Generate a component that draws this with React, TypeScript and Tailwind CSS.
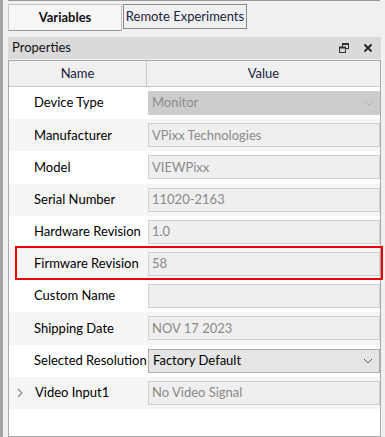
import React from "react";

const font = { fontFamily: "Lato, 'Open Sans', sans-serif" };

function Chevron({ className = "" }: { className?: string }) {
  return (
    <svg width="10" height="6" viewBox="0 0 10 6" className={className}>
      <path d="M1 1 L5 5 L9 1" fill="none" stroke="currentColor" strokeWidth="1" />
    </svg>
  );
}

type Row = {
  name: string;
  value: string;
  kind: "text" | "combo-disabled" | "combo";
  expand?: boolean;
};

const rows: Row[] = [
  { name: "Device Type", value: "Monitor", kind: "combo-disabled" },
  { name: "Manufacturer", value: "VPixx Technologies", kind: "text" },
  { name: "Model", value: "VIEWPixx", kind: "text" },
  { name: "Serial Number", value: "11020-2163", kind: "text" },
  { name: "Hardware Revision", value: "1.0", kind: "text" },
  { name: "Firmware Revision", value: "58", kind: "text" },
  { name: "Custom Name", value: "", kind: "text" },
  { name: "Shipping Date", value: "NOV 17 2023", kind: "text" },
  { name: "Selected Resolution", value: "Factory Default", kind: "combo" },
  { name: "Video Input1", value: "No Video Signal", kind: "text", expand: true },
];

function Field({ row }: { row: Row }) {
  if (row.kind === "combo-disabled") {
    return (
      <div className="flex h-[24px] w-full items-center justify-between bg-[#cccccc] pl-[4px] pr-[6px] text-[#8c8c8c]">
        <span>{row.value}</span>
        <Chevron className="text-[#b4b4b4]" />
      </div>
    );
  }
  if (row.kind === "combo") {
    return (
      <div className="flex h-[24px] w-full items-center justify-between border border-[#adadad] bg-[#e5e5e5] pl-[4px] pr-[6px] text-[#000]">
        <span>{row.value}</span>
        <Chevron className="text-[#555]" />
      </div>
    );
  }
  return (
    <div className="flex h-[24px] w-full items-center border border-[#cfcfcf] bg-[#efefef] pl-[3px] text-[#8a8a8a]">
      <span>{row.value}</span>
    </div>
  );
}

export default function App() {
  return (
    <div
      className="relative flex h-[437px] w-[385px] overflow-hidden bg-[#f0f0f0] text-[13px] text-black"
      style={font}
    >
      <div className="w-[3px] shrink-0 bg-[#a3a3a3]" />
      <div className="flex min-w-0 flex-1 flex-col pl-[5px]">
        {/* tab bar */}
        <div className="mr-[5px] h-[37px] border-t border-[#9a9a9a]">
          <div className="mt-[3px] flex items-start">
            <div className="flex h-[27px] w-[114px] items-center justify-center border border-[#c4c4c4] border-b-[#9a9a9a] bg-[#f6f6f6] font-bold text-[#111]">
              Variables
            </div>
            <div className="ml-[1px] flex h-[25px] w-[124px] items-center justify-center border border-[#8a8a8a] bg-[#f0f0f0] text-[#1c2340]">
              Remote Experiments
            </div>
          </div>
        </div>
        {/* Properties header */}
        <div className="mr-[4px] flex h-[22px] items-center justify-between bg-[#dadada] pl-[4px] pr-[8px] text-[#111]">
          <span>Properties</span>
          <div className="flex items-center gap-[14px]">
            <svg width="10" height="10" viewBox="0 0 10 10">
              <rect x="3.5" y="0.5" width="6" height="5" fill="none" stroke="#333" strokeWidth="1" />
              <rect x="3.5" y="0.5" width="6" height="1.5" fill="#333" />
              <rect x="0.5" y="4" width="6" height="5.5" fill="#dadada" stroke="#333" strokeWidth="1" />
              <rect x="0.5" y="4" width="6" height="1.5" fill="#333" />
            </svg>
            <svg width="10" height="10" viewBox="0 0 10 10">
              <path d="M1.5 1.5 L8.5 8.5 M8.5 1.5 L1.5 8.5" stroke="#222" strokeWidth="1.8" />
            </svg>
          </div>
        </div>
        {/* table */}
        <div className="mr-[4px] mt-[1px] flex-1 border border-[#a9a9a9] bg-white">
          <div className="flex h-[26px] border-b border-[#c8c8c8] bg-[#f0f0f0] text-[#201a40]">
            <div className="flex w-[138px] items-center justify-center border-r border-[#c8c8c8]">Name</div>
            <div className="flex flex-1 items-center justify-center">Value</div>
          </div>
          {rows.map((r, i) => (
            <div
              key={r.name}
              className={`flex h-[32.2px] items-center ${i % 2 === 1 ? "bg-[#f5f5f5]" : "bg-white"}`}
            >
              <div className="flex w-[139px] shrink-0 items-center">
                {r.expand ? (
                  <>
                    <svg width="6" height="10" viewBox="0 0 6 10" className="ml-[8px] mr-[12px]">
                      <path d="M1 1 L5 5 L1 9" fill="none" stroke="#8a8a8a" strokeWidth="1.2" />
                    </svg>
                    <span>{r.name}</span>
                  </>
                ) : (
                  <span className="pl-[25px]">{r.name}</span>
                )}
              </div>
              <div className="flex flex-1 items-center">
                <Field row={r} />
              </div>
            </div>
          ))}
        </div>
      </div>
      {/* highlight annotation */}
      <div className="pointer-events-none absolute left-[15px] top-[246px] h-[34px] w-[368px] border-2 border-[#ee0000]" />
    </div>
  );
}
